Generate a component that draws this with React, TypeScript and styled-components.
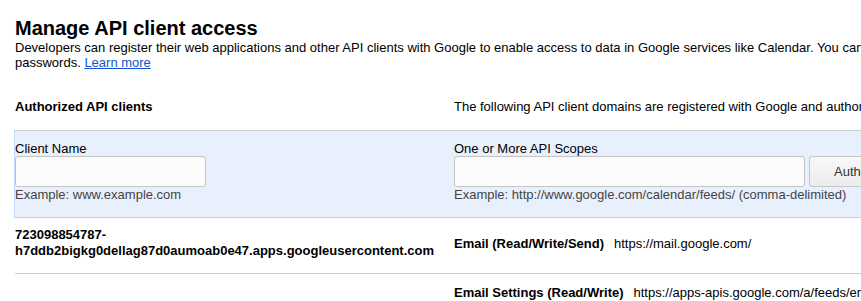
import React from 'react';
import styled, { createGlobalStyle } from 'styled-components';

type ScopeGrant = {
  client: string;
  scopeName: string;
  scopeUrl: string;
};

const GlobalStyle = createGlobalStyle`
  html, body {
    margin: 0;
    overflow: hidden;
    background: #fff;
  }
  body {
    font-family: "Liberation Sans", Arial, sans-serif;
    font-size: 13px;
    color: #000;
  }
`;

const Page = styled.div`
  width: 1400px;
  padding: 17px 15px 0;
`;

const Title = styled.h1`
  margin: 0;
  font-size: 20px;
  line-height: 23px;
  font-weight: bold;
`;

const Description = styled.p`
  margin: 0;
  line-height: 15px;
  white-space: nowrap;
`;

const LearnMore = styled.a`
  color: #1155cc;
  text-decoration: underline;
`;

const Grid = styled.div`
  display: grid;
  grid-template-columns: 439px 1fr;
`;

const HeaderRow = styled(Grid)`
  margin-top: 29px;
  line-height: 15px;
  white-space: nowrap;
`;

const SectionTitle = styled.div`
  font-weight: bold;
`;

const FormPanel = styled(Grid)`
  margin-top: 16px;
  margin-left: -1px;
  padding: 10px 0 15px;
  background: #e8f0fd;
  border-top: 1px solid #c9ced6;
  border-bottom: 1px solid #c9ced6;
  border-left: 1px solid #c3d9ff;
`;

const Field = styled.div`
  display: flex;
  flex-direction: column;
  line-height: 15px;
`;

const FieldLabel = styled.label`
  color: #000;
`;

const Hint = styled.div`
  color: #444;
  white-space: nowrap;
`;

const InputRow = styled.div`
  display: flex;
  gap: 4px;
`;

const TextInput = styled.input<{ $width: number }>`
  box-sizing: border-box;
  width: ${(p) => p.$width}px;
  height: 31px;
  margin: 0;
  padding: 0 6px;
  border: 1px solid #c4c4c4;
  border-radius: 3px;
  background: #fcfcfc;
  font: inherit;
`;

const AuthorizeButton = styled.button`
  box-sizing: border-box;
  height: 31px;
  padding: 0 24px;
  border: 1px solid #c6c6c6;
  border-radius: 3px;
  background: linear-gradient(#f8f8f8, #ececec);
  color: #333;
  font: inherit;
`;

const ClientRow = styled(Grid)`
  padding: 9px 0 15px;
  border-bottom: 1px solid #cccccc;
  align-items: center;
`;

const ClientId = styled.div`
  font-weight: bold;
  line-height: 15.5px;
  padding-right: 6px;
`;

const Scope = styled.div`
  white-space: nowrap;
  line-height: 15px;
  padding-top: 2px;
`;

const ScopeName = styled.span`
  font-weight: bold;
  margin-right: 10px;
`;

const grants: ScopeGrant[] = [
  {
    client: '723098854787-h7ddb2bigkg0dellag87d0aumoab0e47.apps.googleusercontent.com',
    scopeName: 'Email (Read/Write/Send)',
    scopeUrl: 'https://mail.google.com/',
  },
  {
    client: '',
    scopeName: 'Email Settings (Read/Write)',
    scopeUrl: 'https://apps-apis.google.com/a/feeds/emailsettings/2.0/',
  },
];

export default function App() {
  return (
    <Page>
      <GlobalStyle />
      <Title>Manage API client access</Title>
      <Description>
        Developers can register their web applications and other API clients with Google to enable
        access to data in Google services like Calendar. You can authorize these registered clients to
        access your user data without your users having to individually give consent or their
        <br />
        passwords. <LearnMore href="#">Learn more</LearnMore>
      </Description>

      <HeaderRow>
        <SectionTitle>Authorized API clients</SectionTitle>
        <div>
          The following API client domains are registered with Google and authorized to access data
          for your users.
        </div>
      </HeaderRow>

      <FormPanel>
        <Field>
          <FieldLabel>Client Name</FieldLabel>
          <TextInput $width={191} />
          <Hint>Example: www.example.com</Hint>
        </Field>
        <Field>
          <FieldLabel>One or More API Scopes</FieldLabel>
          <InputRow>
            <TextInput $width={351} />
            <AuthorizeButton>Authorize</AuthorizeButton>
          </InputRow>
          <Hint>Example: http://www.google.com/calendar/feeds/ (comma-delimited)</Hint>
        </Field>
      </FormPanel>

      {grants.map((g) => (
        <ClientRow key={g.scopeName}>
          <ClientId>{g.client}</ClientId>
          <Scope>
            <ScopeName>{g.scopeName}</ScopeName>
            {g.scopeUrl}
          </Scope>
        </ClientRow>
      ))}
    </Page>
  );
}
